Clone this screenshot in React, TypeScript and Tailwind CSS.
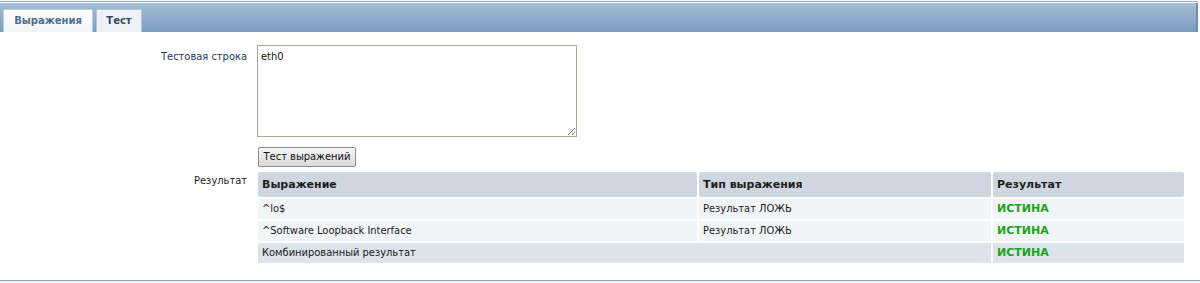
import React from "react";

const ROWS = [
  { expr: "^lo$", type: "Результат ЛОЖЬ", result: "ИСТИНА" },
  { expr: "^Software Loopback Interface", type: "Результат ЛОЖЬ", result: "ИСТИНА" },
];

const BOLD = "font-['DejaVu_Sans',sans-serif] font-bold";

export default function App() {
  return (
    <div className="w-[1200px] h-[283px] bg-white font-['DejaVu_Sans_Condensed','DejaVu_Sans',sans-serif] text-[11px] leading-[14px] text-[#1a1a1a] overflow-hidden">
      {/* tab bar */}
      <div className="mt-px h-px w-[1198px] bg-[#8ea7c3]" />
      <div className="mt-px flex h-[29px] w-[1198px] items-end gap-[3px] border-r-2 border-[#6d8db1] bg-gradient-to-b from-[#a9bfd6] via-[#90adcb] to-[#7a9cc0] pl-[3px]">
        <div className={`flex h-[23px] w-[90px] items-center justify-center rounded-t-[2px] border border-b-0 border-[#c2d0de] bg-gradient-to-b from-white to-[#f1f5f9] text-[10px] text-[#4d6e93] ${BOLD}`}>
          Выражения
        </div>
        <div className={`flex h-[23px] w-[46px] items-center justify-center rounded-t-[2px] border border-b-0 border-[#b3c5d8] bg-[#edf2f8] text-[10px] text-[#3a4c60] ${BOLD}`}>
          Тест
        </div>
      </div>

      {/* form */}
      <div className="grid grid-cols-[247px_1fr] gap-x-[10px] pt-[13px]">
        <div className="pt-[5px] text-right text-[#1d3a5c]">Тестовая строка</div>
        <div>
          <textarea
            defaultValue="eth0"
            className="block h-[92px] w-[320px] resize border border-[#aaa699] bg-white px-[3px] py-[4px] font-['DejaVu_Sans_Condensed','DejaVu_Sans',sans-serif] text-[11px] leading-[14px] text-[#111] outline-none"
          />
          <button
            type="button"
            className="ml-px mt-[10px] block h-[20px] w-[98px] whitespace-nowrap rounded-[2px] border border-[#8b8b8b] bg-gradient-to-b from-[#f7f7f7] to-[#dadada] text-[11px] text-[#111]"
          >
            Тест выражений
          </button>
        </div>

        <div className="pt-[7px] text-right">Результат</div>
        <div className="mt-[3px]">
          <table className="-ml-[1px] w-[930px] border-separate border-spacing-x-[2px] border-spacing-y-[2px] text-left">
            <thead>
              <tr className={`h-[25px] text-[11px] text-[#1e1e1e] ${BOLD}`}>
                <th className="w-[439px] rounded-[2px] bg-[#cfd6df] px-[4px]">Выражение</th>
                <th className="w-[292px] rounded-[2px] bg-[#cfd6df] px-[4px]">Тип выражения</th>
                <th className="rounded-[2px] bg-[#cfd6df] px-[4px]">Результат</th>
              </tr>
            </thead>
            <tbody>
              {ROWS.map((r) => (
                <tr key={r.expr} className="h-[20px]">
                  <td className="bg-[#f1f5f8] px-[4px]">{r.expr}</td>
                  <td className="bg-[#f1f5f8] px-[4px]">{r.type}</td>
                  <td className={`bg-[#f1f5f8] px-[4px] text-[#18a318] ${BOLD}`}>{r.result}</td>
                </tr>
              ))}
              <tr className="h-[20px]">
                <td colSpan={2} className="bg-[#dde3ea] px-[4px]">Комбинированный результат</td>
                <td className={`bg-[#dde3ea] px-[4px] text-[#18a318] ${BOLD}`}>ИСТИНА</td>
              </tr>
            </tbody>
          </table>
        </div>
      </div>

      {/* bottom line */}
      <div className="mt-[15px] h-px w-[1200px] bg-[#8ea3bc]" />
      <div className="h-[2px] w-[1200px] bg-[#eef1f5]" />
    </div>
  );
}
